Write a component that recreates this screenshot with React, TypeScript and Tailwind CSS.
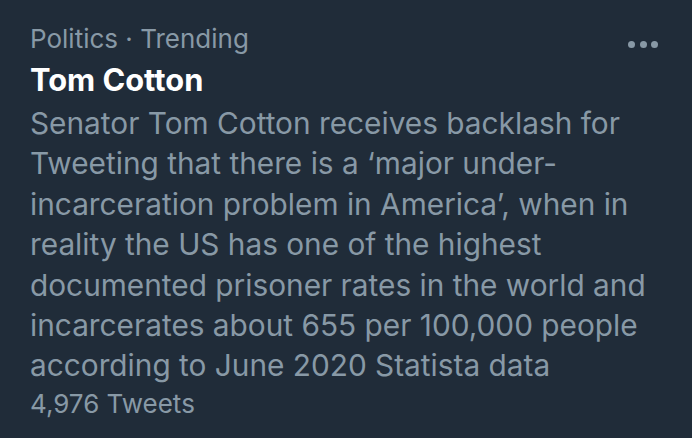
export default function App() {
  const lines = [
    "Senator Tom Cotton receives backlash for",
    "Tweeting that there is a \u2018major under-",
    "incarceration problem in America\u2019, when in",
    "reality the US has one of the highest",
    "documented prisoner rates in the world and",
    "incarcerates about 655 per 100,000 people",
    "according to June 2020 Statista data",
  ];
  return (
    <div
      className="w-[692px] h-[438px] bg-[#202c39] pl-[30px] pr-[30px] pt-[21px] relative"
      style={{ fontFamily: "Inter, 'Noto Sans', sans-serif" }}
    >
      <div className="text-[26px] leading-[36px] text-[#8899a6]">Politics · Trending</div>
      <div className="mt-[3px] text-[30.8px] leading-[40px] font-bold text-white">Tom Cotton</div>
      <div className="mt-[3px] text-[29.8px] leading-[40.4px] text-[#8899a6] whitespace-nowrap">
        {lines.map((l, i) => (
          <div key={i}>{l}</div>
        ))}
      </div>
      <div className="text-[26px] leading-[36px] text-[#8899a6]">4,976 Tweets</div>
      <div className="absolute left-[628px] top-[41px] flex gap-[4.5px]">
        <span className="w-[7px] h-[7px] rounded-full bg-[#8899a6]" />
        <span className="w-[7px] h-[7px] rounded-full bg-[#8899a6]" />
        <span className="w-[7px] h-[7px] rounded-full bg-[#8899a6]" />
      </div>
    </div>
  );
}
